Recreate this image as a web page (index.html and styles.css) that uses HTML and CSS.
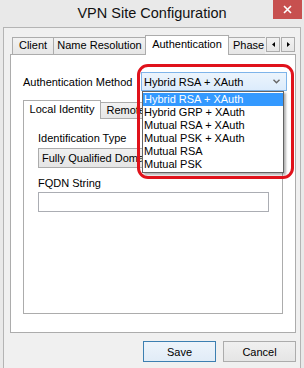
FILE: index.html
```html
<!DOCTYPE html>
<html lang="en">
<head>
  <meta charset="UTF-8">
  <title>VPN Site Configuration</title>
  <link rel="stylesheet" href="styles.css">
</head>
<body>
  <div class="window">
    <div class="titlebar">
      <span></span>
      <span class="title">VPN Site Configuration</span>
      <span class="close">
        <svg width="9" height="9" viewBox="0 0 9 9"><path d="M1 1 L8 8 M8 1 L1 8" stroke="#fff" stroke-width="1.6"/></svg>
      </span>
    </div>

    <div class="client">
      <div class="tabbar">
        <div class="tabs">
          <div class="tab tab-client">Client</div>
          <div class="tab tab-name">Name Resolution</div>
          <div class="tab tab-auth active">Authentication</div>
          <div class="tab tab-phase">Phase 1</div>
        </div>
        <div class="scroller">
          <span class="arrow"><svg width="3" height="5" viewBox="0 0 3 5"><path d="M3 0 L0 2.5 L3 5 Z" fill="#000"/></svg></span>
          <span class="arrow"><svg width="3" height="5" viewBox="0 0 3 5"><path d="M0 0 L3 2.5 L0 5 Z" fill="#000"/></svg></span>
        </div>
      </div>

      <div class="panel">
        <div class="method-row">
          <span class="method-label">Authentication Method</span>
          <div class="combo hot">
            <span>Hybrid RSA + XAuth</span>
            <svg class="chevron" width="7" height="5" viewBox="0 0 7 5"><path d="M0.5 0.8 L3.5 3.8 L6.5 0.8" fill="none" stroke="#666" stroke-width="1.4"/></svg>
            <ul class="droplist">
              <li class="selected">Hybrid RSA + XAuth</li>
              <li>Hybrid GRP + XAuth</li>
              <li>Mutual RSA + XAuth</li>
              <li>Mutual PSK + XAuth</li>
              <li>Mutual RSA</li>
              <li>Mutual PSK</li>
            </ul>
          </div>
        </div>

        <div class="subtabs">
          <div class="tab tab-local active">Local Identity</div>
          <div class="tab tab-remote">Remote Identity</div>
        </div>
        <div class="subpanel">
          <div class="field-label">Identification Type</div>
          <div class="combo plain">Fully Qualified Domain Name</div>
          <div class="field-label spaced">FQDN String</div>
          <div class="textbox"></div>
        </div>
      </div>

      <div class="actions">
        <button class="btn default">Save</button>
        <button class="btn">Cancel</button>
      </div>
    </div>

    <div class="callout"></div>
  </div>
</body>
</html>
```

FILE: styles.css
```css
* {
  box-sizing: border-box;
}

body {
  margin: 0;
  background: #e9e9e9;
  color: #000;
  font-family: "Liberation Sans", Arial, sans-serif;
  font-size: 11px;
}

.window {
  position: relative;
  width: 304px;
  height: 368px;
  background: #e9e9e9;
  display: flex;
  flex-direction: column;
  overflow: hidden;
}

.titlebar {
  height: 27px;
  flex: none;
  display: grid;
  grid-template-columns: 1fr auto 1fr;
  align-items: start;
}

.title {
  font-size: 14.5px;
  line-height: 26px;
  color: #111;
}

.close {
  justify-self: end;
  width: 29px;
  height: 19px;
  margin-right: 2px;
  background: #c7504f;
  display: flex;
  align-items: center;
  justify-content: center;
}

.client {
  flex: 1;
  margin: 0 3px;
  border: 1px solid #b4b4b4;
  border-bottom: none;
  background: #f0f0f0;
}

/* tab strips */
.tabbar {
  display: flex;
  align-items: flex-end;
  height: 20px;
  margin: 7px 0 0 8px;
  position: relative;
  z-index: 1;
}

.tabs {
  display: flex;
  align-items: flex-end;
  width: 253px;
  height: 20px;
  overflow: hidden;
  flex: none;
}

.tab {
  flex: none;
  height: 17px;
  margin-bottom: 1px;
  border: 1px solid #acacac;
  border-bottom: none;
  background: linear-gradient(#f2f2f2, #e6e6e6);
  text-align: center;
  line-height: 15px;
  white-space: nowrap;
}

.tab + .tab {
  margin-left: -1px;
}

.tab.active {
  position: relative;
  height: 20px;
  margin-bottom: 0;
  background: #fff;
  line-height: 17px;
}

.tab-client { width: 42px; }
.tab-name { width: 93px; }
.tab-auth { width: 84px; }
.tab-phase { width: 50px; text-align: left; padding-left: 4px; }

.scroller {
  display: flex;
  gap: 1px;
  margin: 0 0 3px 1px;
}

.arrow {
  width: 14px;
  height: 15px;
  border: 1px solid #acacac;
  background: linear-gradient(#f2f2f2, #e6e6e6);
  display: flex;
  align-items: center;
  justify-content: center;
}

.panel {
  width: 286px;
  height: 279px;
  margin: -1px 0 0 6px;
  padding: 17px 0 0 12px;
  border: 1px solid #acacac;
  background: #fff;
}

.method-row {
  display: flex;
  align-items: center;
  height: 19px;
}

.method-label {
  width: 118px;
  flex: none;
}

.combo {
  position: relative;
  display: flex;
  align-items: center;
  justify-content: space-between;
  white-space: nowrap;
}

.combo.hot {
  width: 146px;
  height: 19px;
  padding-left: 2px;
  border: 1px solid #7eb4ea;
  background: linear-gradient(#ecf4fc, #dcecfc);
}

.chevron {
  margin-right: 6px;
}

.droplist {
  position: absolute;
  top: 18px;
  left: 0;
  width: 142px;
  margin: 0;
  padding: 1px 0;
  list-style: none;
  background: #fff;
  border: 1px solid #646464;
  box-shadow: 2px 2px 2px rgba(0, 0, 0, 0.3);
  z-index: 5;
}

.droplist li {
  height: 13px;
  line-height: 13px;
  padding-left: 1px;
}

.droplist li.selected {
  background: #3399ff;
  color: #fff;
}

.subtabs {
  display: flex;
  align-items: flex-end;
  height: 19px;
  margin-top: 9px;
  position: relative;
  z-index: 1;
}

.subtabs .tab {
  height: 16px;
  line-height: 14px;
}

.subtabs .tab.active {
  height: 19px;
  line-height: 16px;
}

.tab-local { width: 78px; }
.tab-remote { width: 90px; }

.subpanel {
  width: 260px;
  height: 196px;
  margin-top: -1px;
  padding: 13px 0 0 14px;
  border: 1px solid #acacac;
  background: #fff;
}

.field-label {
  line-height: 13px;
}

.field-label.spaced {
  margin-top: 9px;
}

.combo.plain {
  width: 231px;
  height: 20px;
  margin-top: 3px;
  padding-left: 3px;
  border: 1px solid #acacac;
  background: linear-gradient(#f0f0f0, #e5e5e5);
  overflow: hidden;
}

.textbox {
  width: 231px;
  height: 20px;
  margin-top: 2px;
  border: 1px solid #abadb3;
  background: #fff;
}

.actions {
  display: flex;
  justify-content: flex-end;
  gap: 7px;
  margin: 8px 4px 0 0;
}

.btn {
  width: 73px;
  height: 21px;
  padding: 0;
  font: inherit;
  color: #000;
  border: 1px solid #acacac;
  background: linear-gradient(#f0f0f0, #e5e5e5);
}

.btn.default {
  border-color: #3c7fb1;
  background: linear-gradient(#edf4fb, #e1ecf7);
}

.callout {
  position: absolute;
  left: 137px;
  top: 64px;
  width: 157px;
  height: 115px;
  border: 3px solid #e0121b;
  border-radius: 11px;
  z-index: 10;
  pointer-events: none;
}
```
